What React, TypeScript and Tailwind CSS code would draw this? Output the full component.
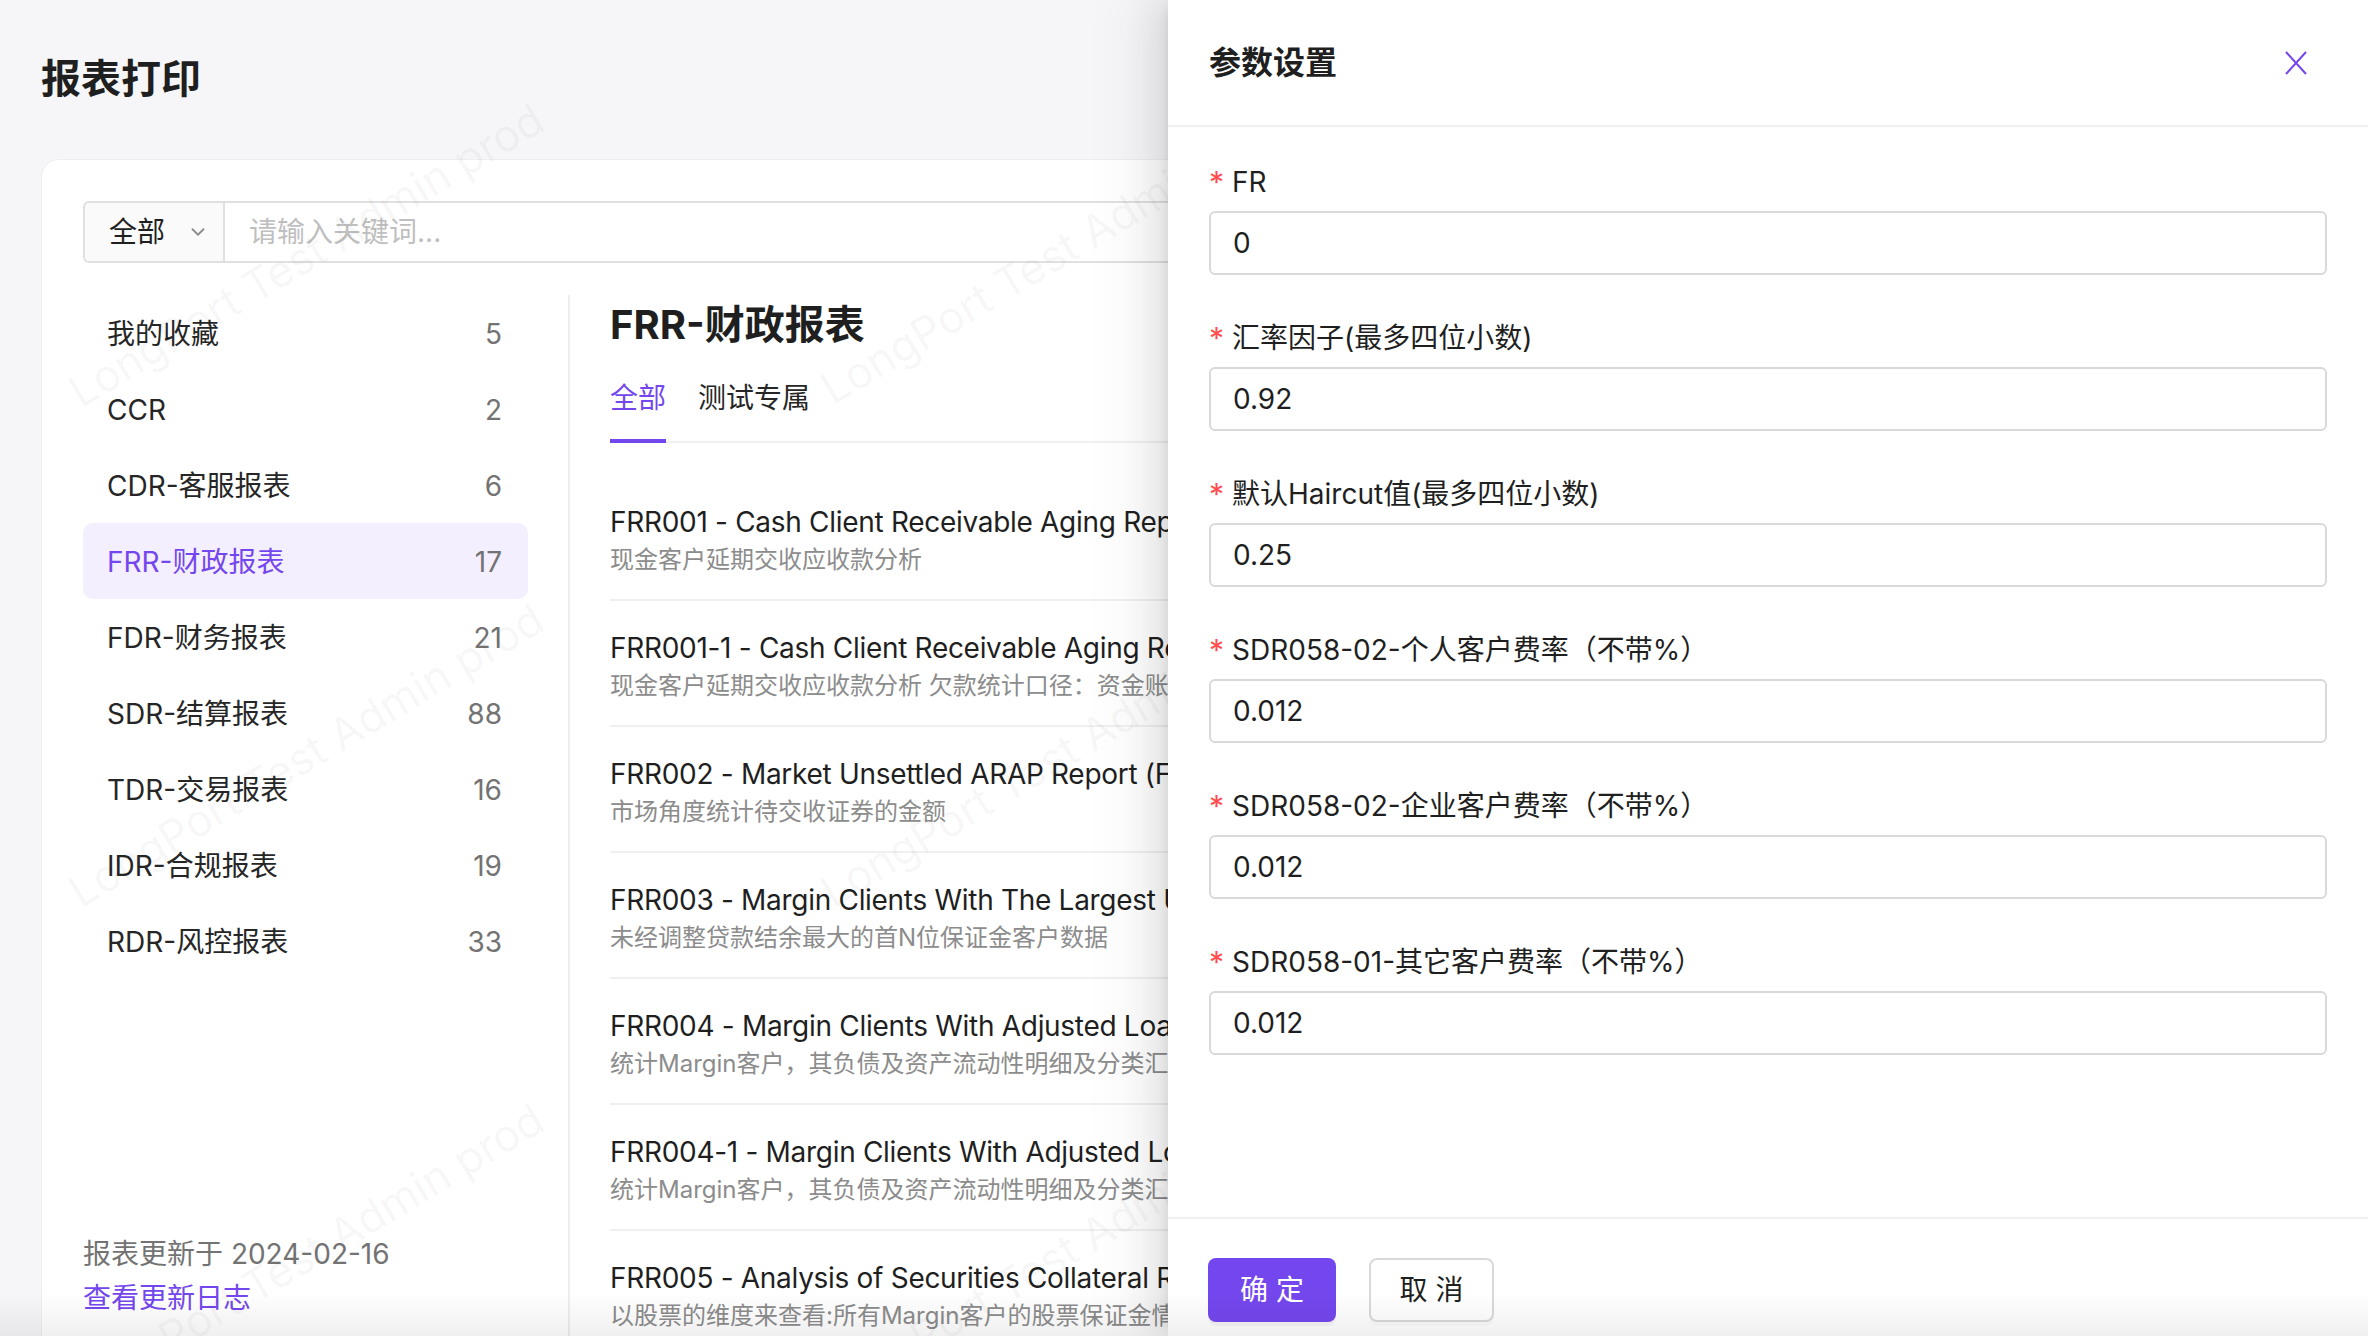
import { ChevronDown } from 'lucide-react'

const categories = [
  { name: '我的收藏', count: 5 },
  { name: 'CCR', count: 2 },
  { name: 'CDR-客服报表', count: 6 },
  { name: 'FRR-财政报表', count: 17, active: true },
  { name: 'FDR-财务报表', count: 21 },
  { name: 'SDR-结算报表', count: 88 },
  { name: 'TDR-交易报表', count: 16 },
  { name: 'IDR-合规报表', count: 19 },
  { name: 'RDR-风控报表', count: 33 },
]

const reports = [
  {
    title: 'FRR001 - Cash Client Receivable Aging Report',
    desc: '现金客户延期交收应收款分析',
  },
  {
    title: 'FRR001-1 - Cash Client Receivable Aging Report (By Account)',
    desc: '现金客户延期交收应收款分析 欠款统计口径：资金账户可用余额',
  },
  {
    title: 'FRR002 - Market Unsettled ARAP Report (Focus)',
    desc: '市场角度统计待交收证券的金额',
  },
  {
    title: 'FRR003 - Margin Clients With The Largest Unadjusted Loan Balance',
    desc: '未经调整贷款结余最大的首N位保证金客户数据',
  },
  {
    title: 'FRR004 - Margin Clients With Adjusted Loan Balance',
    desc: '统计Margin客户，其负债及资产流动性明细及分类汇总',
  },
  {
    title: 'FRR004-1 - Margin Clients With Adjusted Loan Balance (Detail)',
    desc: '统计Margin客户，其负债及资产流动性明细及分类汇总',
  },
  {
    title: 'FRR005 - Analysis of Securities Collateral Report',
    desc: '以股票的维度来查看:所有Margin客户的股票保证金情况',
  },
]

const params = [
  { label: 'FR', value: '0' },
  { label: '汇率因子(最多四位小数)', value: '0.92' },
  { label: '默认Haircut值(最多四位小数)', value: '0.25' },
  { label: 'SDR058-02-个人客户费率（不带%）', value: '0.012' },
  { label: 'SDR058-02-企业客户费率（不带%）', value: '0.012' },
  { label: 'SDR058-01-其它客户费率（不带%）', value: '0.012' },
]

// watermark tiles, centre points
const marks = [
  'left-[306px] top-[255px]',
  'left-[1058px] top-[252px]',
  'left-[306px] top-[755px]',
  'left-[1058px] top-[755px]',
  'left-[306px] top-[1255px]',
  'left-[1058px] top-[1255px]',
]

function Sidebar() {
  return (
    <div className="flex w-[445px] shrink-0 flex-col">
      {categories.map(function (c) {
        return (
          <div
            key={c.name}
            className={
              'flex h-[76px] items-center justify-between rounded-[10px] pl-[24px] pr-[26px] pt-[2px] text-[28px] ' +
              (c.active ? 'bg-[#f4effe] text-[#7447ee]' : 'text-[#262626]')
            }
          >
            <span>{c.name}</span>
            <span className="text-[#737373]">{c.count}</span>
          </div>
        )
      })}
      <div className="mt-[253px] flex flex-col text-[28px] leading-[44px]">
        <span className="text-[#737373]">报表更新于 2024-02-16</span>
        <span className="text-[#7447ee]">查看更新日志</span>
      </div>
    </div>
  )
}

function ReportList() {
  return (
    <div className="flex min-w-0 flex-1 flex-col pl-[40px]">
      <h2 className="text-[40px] font-bold leading-[60px] text-[#1f1f1f]">FRR-财政报表</h2>
      <div className="mt-[21px] flex gap-[32px] border-b-2 border-[#f0f0f0]">
        <div className="-mb-[2px] border-b-4 border-[#7447ee] pb-[19px] text-[28px] leading-[44px] text-[#7447ee]">全部</div>
        <div className="-mb-[2px] border-b-4 border-transparent pb-[19px] text-[28px] leading-[44px] text-[#262626]">测试专属</div>
      </div>
      <div className="mt-[32px] flex flex-col">
        {reports.map(function (r) {
          return (
            <div key={r.title} className="flex flex-col whitespace-nowrap border-b-2 border-[#f0f0f0] pb-[21px] pt-[27px]">
              <span className="text-[28px] leading-[40px] tracking-[-0.3px] text-[#1f1f1f]">{r.title}</span>
              <span className="text-[24px] leading-[36px] text-[#8c8c8c]">{r.desc}</span>
            </div>
          )
        })}
      </div>
    </div>
  )
}

function ParamDrawer() {
  return (
    <div className="absolute bottom-0 right-0 top-0 flex w-[1200px] flex-col bg-white shadow-[-12px_0_32px_rgba(0,0,0,0.08),-6px_0_12px_-8px_rgba(0,0,0,0.12),-18px_0_56px_16px_rgba(0,0,0,0.05)]">
      <div className="flex h-[127px] shrink-0 items-center justify-between border-b-2 border-[#f0f0f0] pl-[41px] pr-[61px]">
        <span className="text-[32px] font-bold leading-[44px] text-[#1f1f1f]">参数设置</span>
        <svg width="22" height="24" viewBox="0 0 22 24" fill="none">
          <path d="M1 1L21 23M21 1L1 23" stroke="#7447ee" strokeWidth="2" />
        </svg>
      </div>
      <div className="flex flex-1 flex-col px-[41px] pt-[33px]">
        {params.map(function (p) {
          return (
            <div key={p.label} className="mb-[41px] flex flex-col">
              <div className="mb-[7px] flex h-[44px] items-center text-[28px] text-[#1f1f1f]">
                <span className="mr-[8px] text-[30px] text-[#ff4d4f]">*</span>
                <span>{p.label}</span>
              </div>
              <div className="flex h-[64px] items-center rounded-[6px] border-2 border-[#d9d9d9] pl-[22px] text-[28px] text-[#1f1f1f]">
                {p.value}
              </div>
            </div>
          )
        })}
      </div>
      <div className="flex h-[119px] shrink-0 gap-[33px] border-t-2 border-[#f0f0f0] pl-[40px] pt-[39px]">
        <button className="h-[64px] w-[128px] rounded-[8px] bg-[#7447ee] text-[28px] text-white shadow-[0_4px_0_rgba(0,0,0,0.04)]">
          确 定
        </button>
        <button className="h-[64px] w-[125px] rounded-[8px] border-2 border-[#d9d9d9] bg-white text-[28px] text-[#1f1f1f] shadow-[0_4px_0_rgba(0,0,0,0.02)]">
          取 消
        </button>
      </div>
    </div>
  )
}

export default function App() {
  return (
    <div className="relative h-[1336px] w-[2368px] overflow-hidden bg-[#f6f6f8] font-['Inter','Noto_Sans_CJK_SC',sans-serif]">
      <div className="flex h-full flex-col px-[41px] pt-[55px]">
        <h1 className="text-[40px] font-bold leading-[48px] text-[#1f1f1f]">报表打印</h1>
        <div className="mt-[56px] flex flex-1 flex-col rounded-t-[18px] border border-b-0 border-[#eeeef0] bg-white pl-[41px] pr-[41px] pt-[41px]">
          <div className="flex h-[62px] shrink-0">
            <div className="flex w-[142px] items-center gap-[22px] rounded-l-[6px] border-2 border-[#e0e0e0] bg-[#fafafa] pl-[24px] text-[28px] text-[#1f1f1f]">
              <span>全部</span>
              <ChevronDown size={22} color="#8c8c8c" strokeWidth={2} />
            </div>
            <div className="flex flex-1 items-center rounded-r-[6px] border-2 border-l-0 border-[#e0e0e0] pl-[24px] text-[28px] text-[#bfbfbf]">
              请输入关键词...
            </div>
          </div>
          <div className="mt-[32px] flex flex-1">
            <Sidebar />
            <div className="ml-[40px] w-[2px] shrink-0 bg-[#eeeeee]" />
            <ReportList />
          </div>
        </div>
      </div>

      {/* watermark */}
      <div className="pointer-events-none absolute inset-0 overflow-hidden">
        {marks.map(function (m) {
          return (
            <span
              key={m}
              className={'absolute -translate-x-1/2 -translate-y-1/2 -rotate-[31deg] whitespace-nowrap font-[\'Liberation_Sans\',sans-serif] text-[44px] text-black/[0.045] ' + m}
            >
              LongPort Test Admin prod
            </span>
          )
        })}
      </div>

      <ParamDrawer />

      <div className="pointer-events-none absolute inset-x-0 bottom-0 h-[44px] bg-linear-to-b from-transparent to-black/[0.06]" />
    </div>
  )
}
